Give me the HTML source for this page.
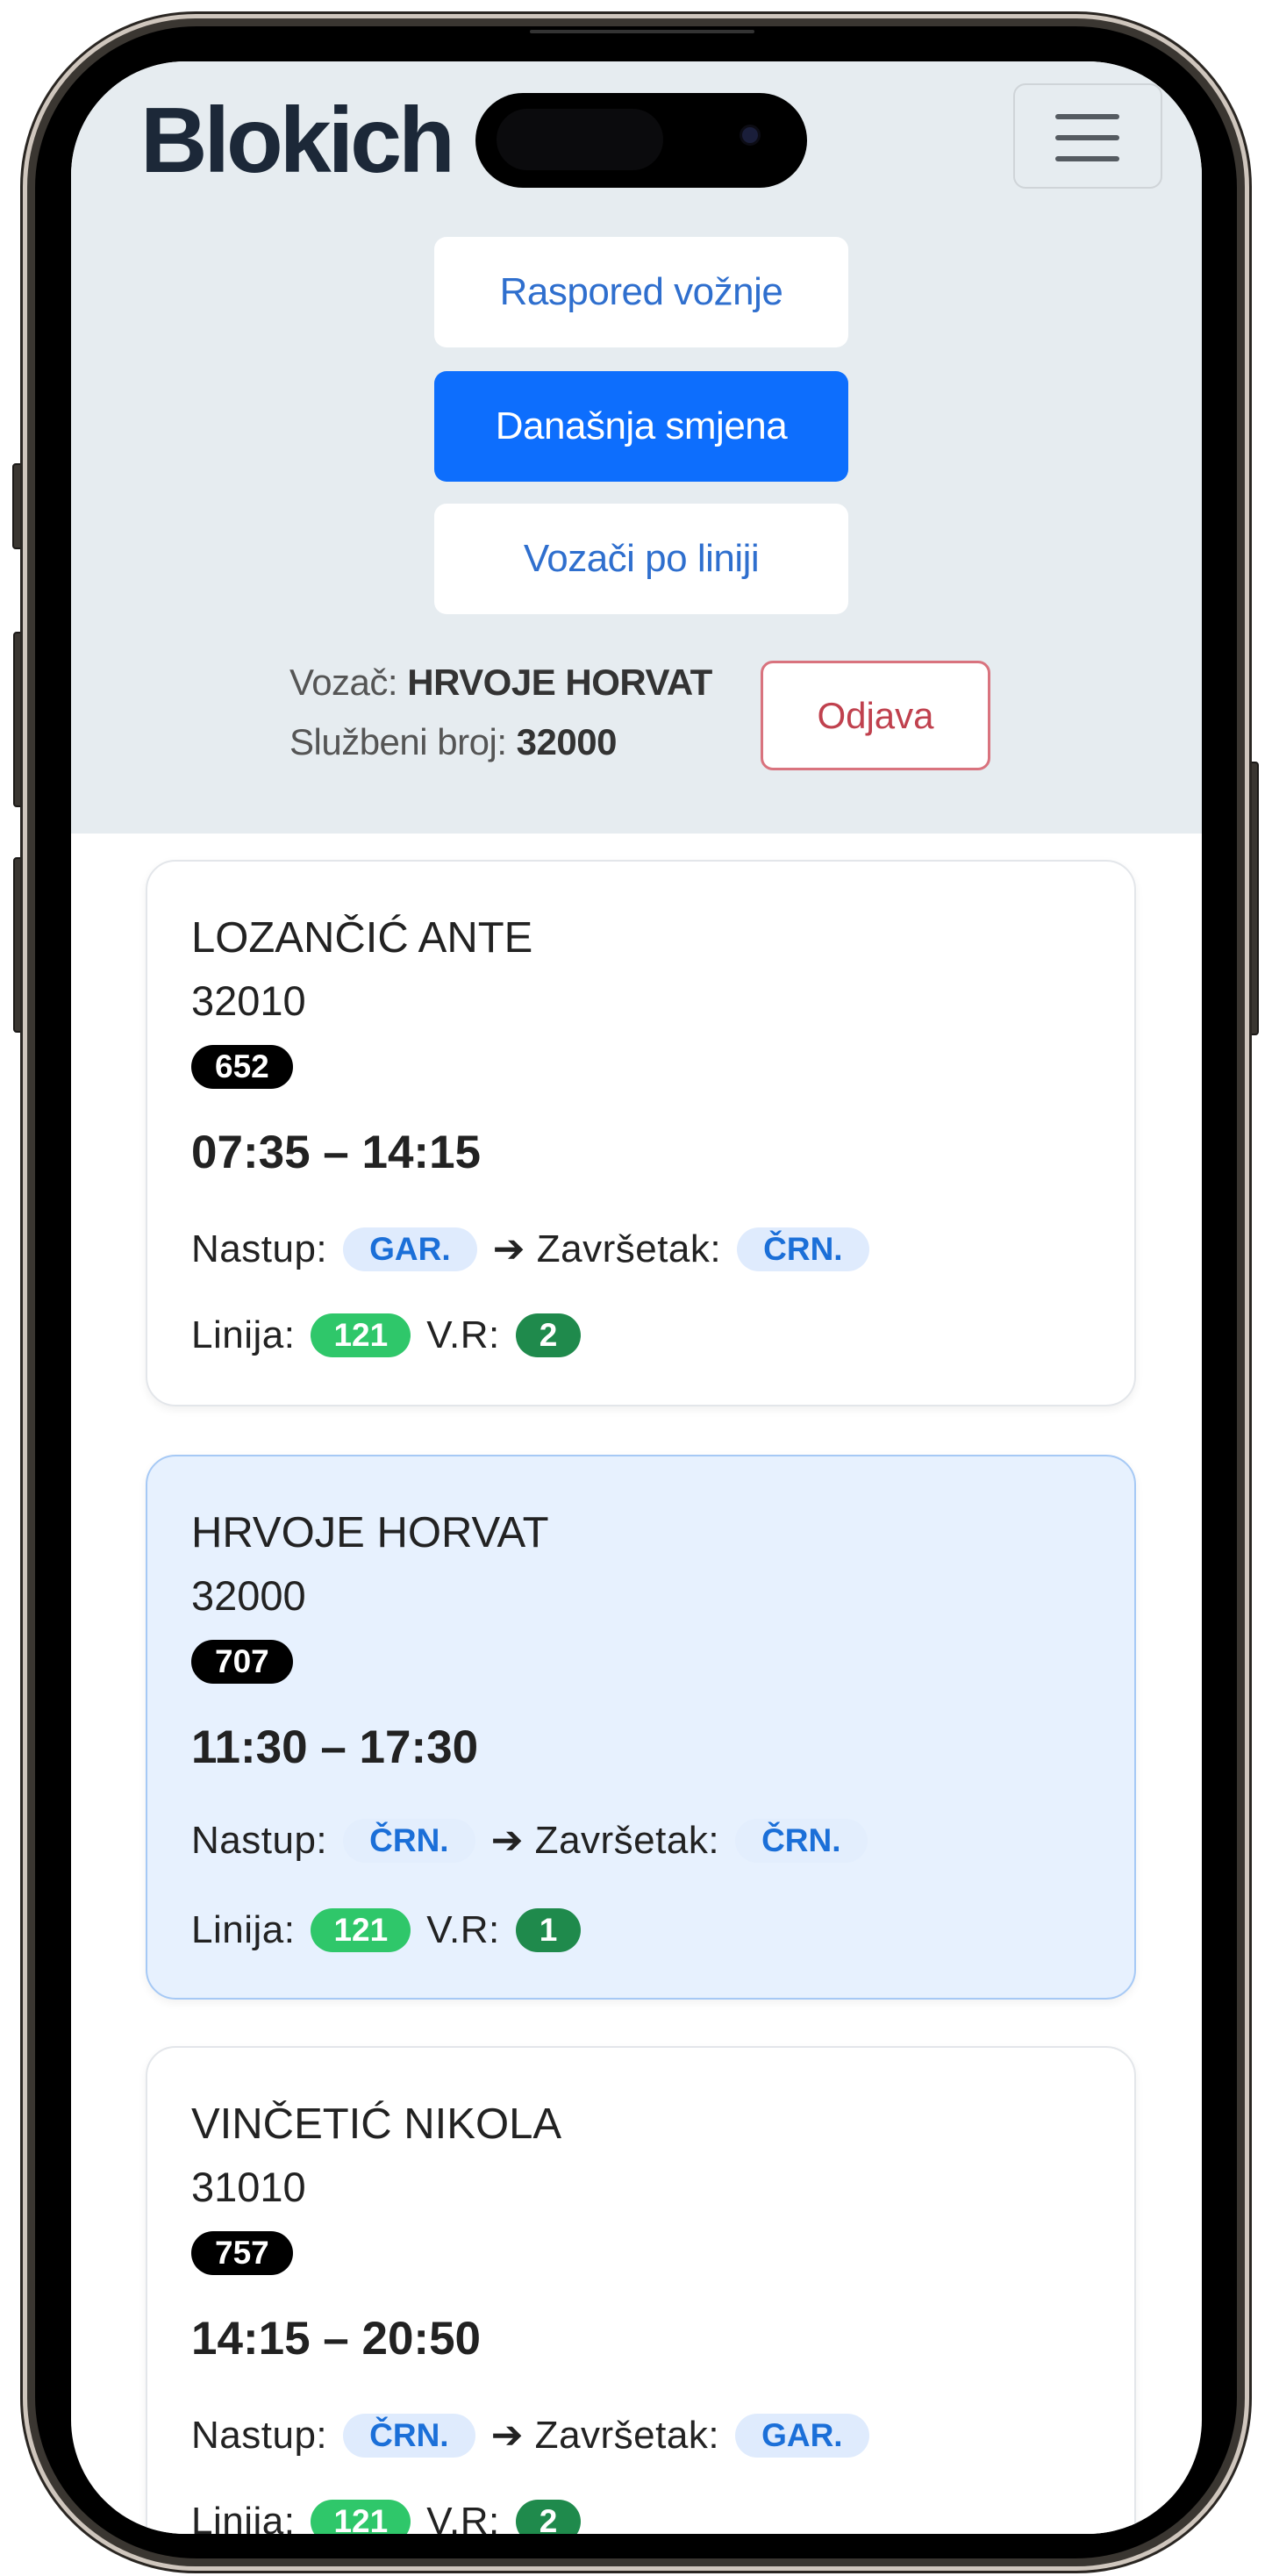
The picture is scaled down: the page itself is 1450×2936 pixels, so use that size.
<!DOCTYPE html>
<html><head><meta charset="utf-8">
<style>
*{margin:0;padding:0;box-sizing:border-box}
html,body{width:1450px;height:2936px;background:#fff;overflow:hidden;font-family:"Liberation Sans",sans-serif}
.abs{position:absolute}
.rim{left:23px;top:13px;width:1404px;height:2920px;border-radius:200px;background:#cfc6bd;border:3px solid #2a2622}
.rim2{left:31px;top:21px;width:1388px;height:2904px;border-radius:192px;background:#3a3631}
.bez{left:40px;top:30px;width:1370px;height:2886px;border-radius:184px;background:#000}
.screen{left:81px;top:70px;width:1289px;height:2818px;border-radius:130px;background:#fff;overflow:hidden}
.hdr{left:0;top:0;width:1289px;height:880px;background:#e6ecf0}
.btn{position:absolute;left:414px;width:472px;height:126px;border-radius:14px;background:#fff;color:#2f6fce;font-size:44px;text-align:center;line-height:126px;letter-spacing:-0.5px}
.card{position:absolute;left:85px;width:1129px;border-radius:34px;background:#fff;border:2px solid #e3e6ea;box-shadow:0 4px 10px rgba(0,0,0,.06)}
.row{position:absolute;left:50px;white-space:nowrap;color:#222}
.name{font-size:49px;top:62px;line-height:50px}
.num{font-size:47px;top:134px;line-height:50px}
.bd{top:209px;height:50px;line-height:50px;padding:0 27px;border-radius:25px;background:#000;color:#fff;font-weight:bold;font-size:37px}
.time{top:300px;font-size:53px;font-weight:bold;line-height:64px}
.lr{font-size:44px;line-height:50px;display:flex;align-items:center;letter-spacing:0.5px}
.chip{display:inline-block;height:50px;line-height:50px;border-radius:25px;padding:0 30px;font-size:37px;font-weight:bold;margin:0 18px;letter-spacing:0}
.cb{background:#dfebfd;color:#1b6fd8}
.cg{background:#2fc76a;color:#fff;padding:0 26px}
.cd{background:#1f8a4c;color:#fff;padding:0 27px}
.sb{position:absolute;background:#3a3631;border:2px solid #1b1917;border-radius:4px}
</style></head><body>
<div class="sb" style="left:14px;top:528px;width:14px;height:98px"></div>
<div class="sb" style="left:15px;top:720px;width:13px;height:200px"></div>
<div class="sb" style="left:15px;top:977px;width:13px;height:200px"></div>
<div class="sb" style="left:1422px;top:868px;width:13px;height:312px"></div>
<div class="abs rim"></div>
<div class="abs rim2"></div>
<div class="abs bez"></div>
<div class="abs screen">
  <div class="abs hdr"></div>
  <div class="abs" style="left:79px;top:30px;font-size:106px;font-weight:bold;color:#1c2838;letter-spacing:-4px;line-height:120px">Blokich</div>
  <div class="abs" style="left:1074px;top:25px;width:170px;height:120px;border:2px solid #cfd4d8;border-radius:14px"></div>
  <div class="abs" style="left:1122px;top:60px;width:73px;height:6px;border-radius:3px;background:#555b61"></div>
  <div class="abs" style="left:1122px;top:84px;width:73px;height:6px;border-radius:3px;background:#555b61"></div>
  <div class="abs" style="left:1122px;top:108px;width:73px;height:6px;border-radius:3px;background:#555b61"></div>
  <div class="btn" style="top:200px">Raspored vožnje</div>
  <div class="btn" style="top:353px;background:#0d6efd;color:#fff">Današnja smjena</div>
  <div class="btn" style="top:504px">Vozači po liniji</div>
  <div class="abs" style="left:249px;top:684px;font-size:42px;color:#555;line-height:48px;letter-spacing:-0.5px">Vozač: <b style="color:#333">HRVOJE HORVAT</b></div>
  <div class="abs" style="left:249px;top:752px;font-size:42px;color:#555;line-height:48px;letter-spacing:-0.5px">Službeni broj: <b style="color:#333">32000</b></div>
  <div class="abs" style="left:786px;top:683px;width:262px;height:125px;border:3px solid #d9737e;border-radius:14px;background:#fff;color:#c0414e;font-size:42px;text-align:center;line-height:119px">Odjava</div>

  <div class="card" style="top:910px;height:623px">
    <div class="row name">LOZANČIĆ ANTE</div>
    <div class="row num">32010</div>
    <div class="row bd">652</div>
    <div class="row time">07:35 – 14:15</div>
    <div class="row lr" style="top:417px">Nastup:<span class="chip cb">GAR.</span>➔&nbsp;Završetak:<span class="chip cb">ČRN.</span></div>
    <div class="row lr" style="top:515px">Linija:<span class="chip cg">121</span>V.R:<span class="chip cd">2</span></div>
  </div>
  <div class="card" style="top:1588px;height:621px;background:#e7f1fe;border-color:#a6c9f5">
    <div class="row name">HRVOJE HORVAT</div>
    <div class="row num">32000</div>
    <div class="row bd">707</div>
    <div class="row time">11:30 – 17:30</div>
    <div class="row lr" style="top:413px">Nastup:<span class="chip cb" style="background:#e3eefd">ČRN.</span>➔&nbsp;Završetak:<span class="chip cb" style="background:#e3eefd">ČRN.</span></div>
    <div class="row lr" style="top:515px">Linija:<span class="chip cg">121</span>V.R:<span class="chip cd">1</span></div>
  </div>
  <div class="card" style="top:2262px;height:700px">
    <div class="row name">VINČETIĆ NIKOLA</div>
    <div class="row num">31010</div>
    <div class="row bd">757</div>
    <div class="row time">14:15 – 20:50</div>
    <div class="row lr" style="top:417px">Nastup:<span class="chip cb">ČRN.</span>➔&nbsp;Završetak:<span class="chip cb">GAR.</span></div>
    <div class="row lr" style="top:515px">Linija:<span class="chip cg">121</span>V.R:<span class="chip cd">2</span></div>
  </div>
</div>
<div class="abs" style="left:542px;top:106px;width:378px;height:108px;border-radius:54px;background:#000"></div>
<div class="abs" style="left:566px;top:124px;width:190px;height:70px;border-radius:35px;background:#0b0b0d"></div>
<div class="abs" style="left:843px;top:142px;width:24px;height:24px;border-radius:12px;background:#1a1e3a;border:3px solid #0c0c14"></div>
<div class="abs" style="left:604px;top:34px;width:256px;height:4px;border-radius:2px;background:#333"></div>
</body></html>
